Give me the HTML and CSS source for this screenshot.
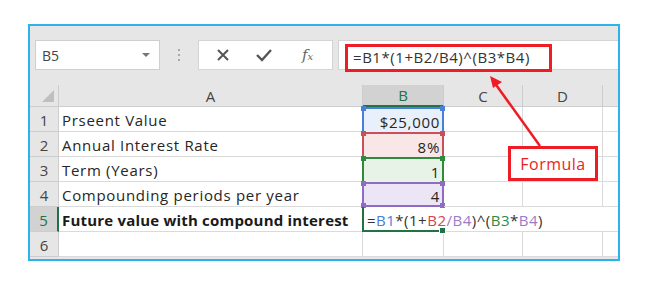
FILE: index.html
```html
<!DOCTYPE html>
<html lang="en">
<head>
  <meta charset="UTF-8" />
  <title>Compound interest formula</title>
  <link rel="stylesheet" href="styles.css">
</head>
<body>
  <div class="frame">
    <div class="toolbar">
      <div class="namebox">
        <span>B5</span>
        <span class="caret"></span>
      </div>
      <div class="sep"><i></i><i></i><i></i></div>
      <div class="fbtns">
        <svg width="14" height="14" viewBox="0 0 14 14"><path d="M2 2 L12 12 M12 2 L2 12" stroke="#555" stroke-width="2" fill="none"/></svg>
        <svg width="18" height="14" viewBox="0 0 18 14"><path d="M2 7 L7 12 L16 2" stroke="#555" stroke-width="2.4" fill="none"/></svg>
        <span class="fx">f<small>x</small></span>
      </div>
      <div class="finput">
        <span class="ftext">=B1*(1+B2/B4)^(B3*B4)</span>
      </div>
    </div>

    <div class="sheet">
      <div class="hd corner"><span class="tri"></span></div>
      <div class="hd col">A</div>
      <div class="hd col sel">B</div>
      <div class="hd col">C</div>
      <div class="hd col">D</div>
      <div class="hd col last"></div>

      <div class="hd row">1</div>
      <div class="cell">Prseent Value</div>
      <div class="cell num rng blue">$25,000<i class="tl"></i><i class="tr"></i></div>
      <div class="cell"></div>
      <div class="cell"></div>
      <div class="cell last"></div>

      <div class="hd row">2</div>
      <div class="cell">Annual Interest Rate</div>
      <div class="cell num rng red">8%<i class="tl"></i><i class="tr"></i></div>
      <div class="cell"></div>
      <div class="cell"></div>
      <div class="cell last"></div>

      <div class="hd row">3</div>
      <div class="cell">Term (Years)</div>
      <div class="cell num rng green">1<i class="tl"></i><i class="tr"></i></div>
      <div class="cell"></div>
      <div class="cell"></div>
      <div class="cell last"></div>

      <div class="hd row">4</div>
      <div class="cell">Compounding periods per year</div>
      <div class="cell num rng purple bottom">4<i class="tl"></i><i class="tr"></i><i class="bl"></i><i class="br"></i></div>
      <div class="cell"></div>
      <div class="cell"></div>
      <div class="cell last"></div>

      <div class="hd row sel">5</div>
      <div class="cell bold">Future value with compound interest</div>
      <div class="cell active">=<b class="c1">B1</b>*(1+<b class="c2">B2</b><b class="c4">/</b><b class="c4">B4</b>)^(<b class="c3">B3</b>*<b class="c4">B4</b>)<i class="handle"></i></div>
      <div class="cell noleft"></div>
      <div class="cell noleft"></div>
      <div class="cell last"></div>

      <div class="hd row">6</div>
      <div class="cell"></div>
      <div class="cell"></div>
      <div class="cell"></div>
      <div class="cell"></div>
      <div class="cell last"></div>
    </div>

    <div class="callout">Formula</div>
    <svg class="arrow" width="80" height="80" viewBox="0 0 80 80">
      <path d="M58 78 L12 14" stroke="#ee1c24" stroke-width="2.5" fill="none"/>
      <path d="M8 8 L20 14 L11 20 Z" fill="#ee1c24"/>
    </svg>
  </div>
</body>
</html>
```

FILE: styles.css
```css
body {
  margin: 0;
  background: #fff;
  font-family: 'Open Sans', 'Liberation Sans', sans-serif;
  color: #262626;
}

.frame {
  position: relative;
  margin: 24px 0 0 28px;
  width: 588px;
  height: 233px;
  border: 2px solid #2db3ec;
  background: #e6e6e6;
}

/* formula bar */
.toolbar {
  display: flex;
  align-items: flex-start;
  height: 45px;
  padding: 14px 0 0 5px;
}

.namebox {
  display: flex;
  align-items: center;
  justify-content: space-between;
  box-sizing: border-box;
  width: 125px;
  height: 30px;
  padding: 0 9px 0 6px;
  background: #fff;
  border: 1px solid #cfcfcf;
  font-size: 14px;
  color: #444;
}

.caret {
  width: 0;
  height: 0;
  border-left: 4px solid transparent;
  border-right: 4px solid transparent;
  border-top: 4px solid #777;
}

.sep {
  display: flex;
  flex-direction: column;
  gap: 3px;
  width: 38px;
  align-items: center;
  padding-top: 9px;
}

.sep i {
  width: 2px;
  height: 2px;
  background: #a8a8a8;
}

.fbtns {
  display: flex;
  align-items: center;
  gap: 25px;
  box-sizing: border-box;
  width: 135px;
  height: 30px;
  padding: 0 0 0 17px;
  background: #fff;
  border: 1px solid #d4d4d4;
}

.fx {
  margin-left: 4px;
  font-family: 'DejaVu Serif', serif;
  font-style: italic;
  font-size: 15px;
  color: #666;
}

.fx small {
  font-size: 10px;
}

.finput {
  box-sizing: border-box;
  width: 280px;
  height: 30px;
  margin-left: 5px;
  padding: 4px 0 0 6px;
  background: #fff;
  border: 1px solid #d4d4d4;
  border-right: none;
}

.ftext {
  display: block;
  box-sizing: border-box;
  width: 207px;
  height: 28px;
  margin-top: -1px;
  padding: 0 0 0 5px;
  border: 3px solid #ee1c24;
  font-size: 15px;
  letter-spacing: 0.55px;
  line-height: 21px;
  color: #333;
  white-space: nowrap;
}

/* sheet */
.sheet {
  display: grid;
  grid-template-columns: 29px 304px 81px 79px 80px 15px;
  grid-template-rows: 22px repeat(6, 25px);
  background: #fff;
  font-size: 15px;
}

.hd {
  box-sizing: border-box;
  display: flex;
  align-items: center;
  justify-content: center;
  background: #e6e6e6;
  color: #444;
  border-right: 1px solid #cdcdcd;
  border-bottom: 1px solid #cdcdcd;
}

.hd.row {
  padding-top: 2px;
}

.hd.col.last {
  border-right: none;
}

.hd.sel {
  background: #d2d2d2;
  color: #217346;
}

.hd.col.sel {
  border-bottom: 2px solid #217346;
}

.hd.row.sel {
  border-right: 2px solid #217346;
}

.corner {
  position: relative;
}

.tri {
  position: absolute;
  right: 4px;
  bottom: 4px;
  width: 0;
  height: 0;
  border-left: 12px solid transparent;
  border-bottom: 12px solid #bfbfbf;
}

.cell {
  position: relative;
  box-sizing: border-box;
  display: flex;
  align-items: center;
  padding: 2px 3px 0;
  border-right: 1px solid #dadada;
  border-bottom: 1px solid #dadada;
  white-space: nowrap;
  letter-spacing: 0.7px;
}

.cell.last {
  border-right: none;
}

.cell.noleft {
  border-right: none;
}

.cell.bold {
  font-weight: 700;
  letter-spacing: 0.2px;
  color: #1a1a1a;
  border-right: none;
}

.num {
  justify-content: flex-end;
}

.rng {
  border: 2px solid;
  border-bottom: none;
  margin-left: -1px;
  padding-right: 2px;
}

.rng.bottom {
  border-bottom: 2px solid;
}

.rng.blue { border-color: #4a7fd6; background: #e8f0fb; }
.rng.red { border-color: #c9505a; background: #f9e7e7; }
.rng.green { border-color: #2e8b3e; background: #e7f3e7; }
.rng.purple { border-color: #8e6cc6; background: #ebe5f5; }

.rng i, .handle {
  position: absolute;
  width: 5px;
  height: 5px;
}

.rng.blue i { background: #4a7fd6; }
.rng.red i { background: #c9505a; }
.rng.green i { background: #2e8b3e; }
.rng.purple i { background: #8e6cc6; }

.rng .tl { left: -3px; top: -3px; }
.rng .tr { right: -3px; top: -3px; }
.rng .bl { left: -3px; bottom: -3px; }
.rng .br { right: -3px; bottom: -3px; }

.active {
  overflow: visible;
  margin-left: -1px;
  padding-left: 3px;
  border-left: 2px solid #217346;
  border-bottom: 2px solid #217346;
  border-right: none;
  letter-spacing: 0.5px;
  color: #333;
  z-index: 2;
}

.active b {
  font-weight: 400;
}

.c1 { color: #4a7fd6; }
.c2 { color: #d9434e; }
.c3 { color: #2e8b3e; }
.c4 { color: #9a7ccb; }

.handle {
  right: -2px;
  bottom: -4px;
  background: #217346;
  border: 1px solid #fff;
}

/* annotation */
.callout {
  position: absolute;
  left: 478px;
  top: 120px;
  box-sizing: border-box;
  width: 90px;
  height: 35px;
  border: 3px solid #ee1c24;
  background: #fff;
  color: #ee1c24;
  font-size: 16px;
  letter-spacing: 0.5px;
  display: flex;
  align-items: center;
  justify-content: center;
}

.arrow {
  position: absolute;
  left: 452px;
  top: 42px;
}
```
